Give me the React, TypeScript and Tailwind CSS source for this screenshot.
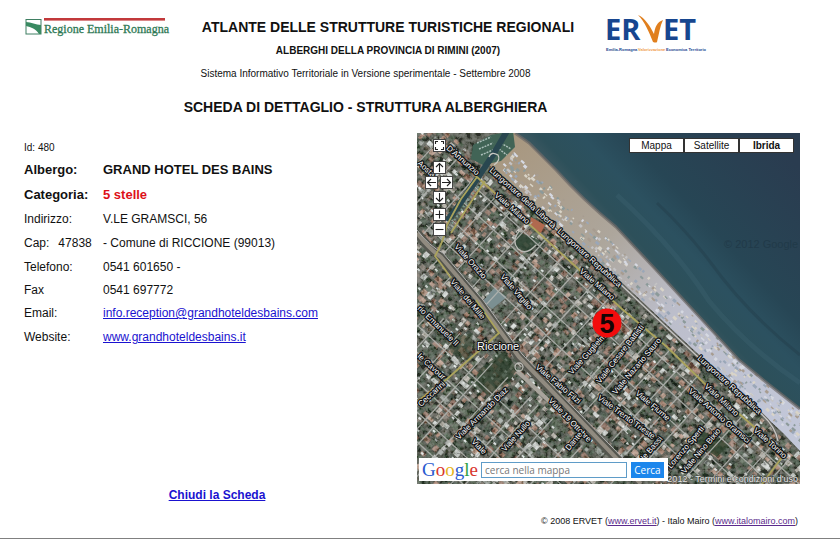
import React from "react";

const LINK = "text-[#1a12d0] underline";
const VISITED = "text-[#5b2a8c] underline";

function RegioneLogo() {
  return (
    <svg className="block h-[22px] w-[152px]" viewBox="0 0 152 22" role="img" aria-label="Regione Emilia-Romagna">
      <rect x="2" y="2.5" width="15" height="14.5" fill="#fff" stroke="#3f7f62" strokeWidth="1" />
      <path d="M2 5 C7 5 12 8 17 8 V17 H15 C12 12 7 10 2 9 Z" fill="#3a8a62" />
      <rect x="20" y="1" width="121" height="2.6" fill="#c2393b" />
      <text x="20" y="16" fontSize="12" fontWeight="400" fill="#2f7a56" stroke="#2f7a56" strokeWidth="0.3" fontFamily="'Liberation Serif', serif">
        Regione Emilia-Romagna
      </text>
    </svg>
  );
}

function ErvetLogo() {
  return (
    <svg className="block h-[52px] w-[110px]" viewBox="0 -8 110 52" role="img" aria-label="ERVET">
      <g fontFamily="'Open Sans', sans-serif" fontWeight="700" fontSize="29" fill="#17468f">
        <text x="0" y="26">ER</text>
        <text x="58" y="26">ET</text>
      </g>
      <path d="M33 1 C40 4 45 12 49 20 C50 13 52 8 58 6 C55 12 54 20 52 28 Q51 29 48 28 C44 18 40 8 33 1 Z" fill="#e07f1e" />
      <g fontFamily="'Liberation Sans', sans-serif" fontWeight="700" fontSize="4" fill="#17468f">
        <text x="1" y="37">Emilia-Romagna</text>
        <text x="33" y="37" fill="#f09a44">Valorizzazione</text>
        <text x="61" y="37">Economica Territorio</text>
      </g>
    </svg>
  );
}

function makeRandom(seed: number) {
  let s = seed;
  return () => {
    s = (s * 1664525 + 1013904223) % 4294967296;
    return s / 4294967296;
  };
}

type Block = { x: number; y: number; w: number; h: number; fill: string };

const ROOFS = ["#8f6c5d", "#b08b79", "#6c6157", "#b9b3ab", "#7d5647", "#8e9590", "#ced2d0", "#55544c", "#9c705c"];
const TREES = ["#2a3c2c", "#364a36", "#1f2d24", "#42523f", "#2d3f2f"];

function makeBlocks(): Block[] {
  const rnd = makeRandom(47838);
  const out: Block[] = [];
  for (let u = -90; u < 450; u += 6) {
    for (let v = 3; v < 300; v += 6) {
      const roof = rnd() < 0.54;
      const list = roof ? ROOFS : TREES;
      const fill = list[Math.floor(rnd() * list.length)];
      out.push({ x: u + rnd() * 3, y: v + rnd() * 3, w: 3 + rnd() * 4, h: 3 + rnd() * 3, fill });
      if (rnd() < 0.14) out.push({ x: u + rnd() * 4, y: v + rnd() * 4, w: 3, h: 2, fill: "#dfe6e6" });
    }
  }
  return out;
}

const BLOCKS = makeBlocks();

function makeCabins(): Block[] {
  const rnd = makeRandom(99013);
  const out: Block[] = [];
  const tones = ["#c4c3c4", "#8c9a9a", "#d6d9e2", "#a79c90", "#9aa7b8", "#d9d4c8"];
  for (let i = 0; i < 480; i++) {
    const u = 5 + rnd() * 430;
    out.push({ x: u, y: -4 - rnd() * 22, w: 1.5 + rnd() * 3, h: 1 + rnd() * 2, fill: tones[Math.floor(rnd() * 6)] });
  }
  return out;
}

const CABINS = makeCabins();
const CROSS_ROADS = [-58, -32, -6, 22, 43, 66, 88, 112, 132, 153, 174, 194, 214, 233, 254, 273, 292, 312, 331, 352, 372, 394, 416];
const LONG_ROADS = [27, 46, 67, 88, 168, 188, 210, 232, 254];

const LABELS: [number, number, number, string][] = [
  [29, 16, 41, "D'Annunzio"],
  [0, 31, 42, "Aosta"],
  [72, 38, 42, "Lungomare della Libertà"],
  [140, 99, 42, "Lungomare Repubblica"],
  [77, 63, 41, "Viale Milano"],
  [162, 139, 41, "Viale Milano"],
  [37, 114, 48, "Viale Orazio"],
  [83, 144, 49, "Viale Virgilio"],
  [33, 149, 50, "Viale dei Mille"],
  [0, 176, 44, "rio Emanuele II"],
  [0, 224, 42, "le Cavour"],
  [4, 274, -42, "Ceccarini"],
  [42, 307, -45, "Viale Armando Diaz"],
  [88, 319, -48, "Viale Nullo"],
  [118, 235, 40, "Viale Fabio Filzi"],
  [131, 268, 46, "Viale 19 Ottobre"],
  [155, 242, -48, "Viale Guglielmo"],
  [183, 251, -52, "Viale Cesare Battisti"],
  [199, 262, -50, "Viale Nazario Sauro"],
  [218, 261, 40, "Viale Fiume"],
  [180, 266, 36, "Viale Trento Trieste"],
  [280, 226, 42, "Lungomare Repubblica"],
  [287, 254, 43, "Viale Milano"],
  [271, 259, 41, "Viale Antonio Gramsci"],
  [336, 298, 42, "Viale Torino"],
  [220, 336, -49, "Viale Bassi"],
  [254, 336, -50, "Lorenzo Sperti"],
  [268, 341, -50, "Viale Nino Bixio"],
  [54, 309, 46, "Viale"],
  [152, 318, -50, "Dante"],
];

function MapPicture() {
  return (
    <svg className="block h-full w-full" viewBox="0 0 383 351" preserveAspectRatio="xMinYMin slice" aria-hidden="true">
      <defs>
        <linearGradient id="sea" gradientUnits="userSpaceOnUse" x1="210" y1="130" x2="350" y2="0">
          <stop offset="0" stopColor="#445c64" />
          <stop offset="0.12" stopColor="#2d505a" />
          <stop offset="0.28" stopColor="#2c5160" />
          <stop offset="0.45" stopColor="#274655" />
          <stop offset="1" stopColor="#2a3c50" />
        </linearGradient>
        <linearGradient id="sand" gradientUnits="userSpaceOnUse" x1="90" y1="10" x2="370" y2="290">
          <stop offset="0" stopColor="#a8977f" />
          <stop offset="0.35" stopColor="#ada69c" />
          <stop offset="0.6" stopColor="#bcbecb" />
          <stop offset="1" stopColor="#c2c7d8" />
        </linearGradient>
        <filter id="grain" x="0" y="0" width="100%" height="100%">
          <feTurbulence type="fractalNoise" baseFrequency="0.22" numOctaves="3" seed="5" />
          <feColorMatrix values="2.4 0 0 0 -0.8  2.4 0 0 0 -0.78  2.4 0 0 0 -0.82  0 0 0 0 0.3" />
        </filter>
        <clipPath id="land">
          <path d="M0 0 H88 L72 32 L140 95 L200 145 L280 220 L366 300 L383 318 V351 H0 Z" />
        </clipPath>
      </defs>

      <rect width="383" height="351" fill="#3e4239" />
      <g clipPath="url(#land)">
        <g transform="translate(76 34) rotate(42.5)">
          {BLOCKS.map((b, i) => (
            <rect key={i} x={b.x} y={b.y} width={b.w} height={b.h} fill={b.fill} />
          ))}
        </g>
        <rect width="383" height="351" filter="url(#grain)" />
        <path d="M64 235 L88 218 L100 236 L92 250 L70 262 L58 250 Z" fill="#2a3d29" opacity="0.65" />
        <path d="M30 205 L56 200 L52 228 L34 220 Z" fill="#35452f" opacity="0.5" />
        <path d="M100 98 L124 108 L112 121 L98 114 Z" fill="#2f4535" opacity="0.85" />
        <path d="M282 296 L312 312 L300 324 L280 310 Z" fill="#2f432e" opacity="0.8" />
        <path d="M77 155 L90 164 L75 176 L66 168 Z" fill="#7b8f92" />
        <path d="M114 84 L128 92 L124 100 L112 92 Z" fill="#b0694f" />
        <g transform="translate(76 34) rotate(42.5)" stroke="#b4b6b2" strokeWidth="1.3" opacity="0.85">
          {CROSS_ROADS.map((u, i) => (
            <path key={u} d={i % 3 === 1 ? `M${u} 14 V122 M${u + 9} 145 V300` : `M${u} 14 V122 M${u} 145 V300`} />
          ))}
          {LONG_ROADS.map((v) => (
            <path key={v} d={`M${v < 100 ? -10 : -80} ${v} H450`} />
          ))}
        </g>
        <path d="M0 100 Q12 116 24 124 L62 169 L102 224 L156 280 L224 351" fill="none" stroke="#55564f" strokeWidth="9" />
        <path d="M0 100 Q12 116 24 124 L62 169 L102 224 L156 280 L224 351" fill="none" stroke="#918b80" strokeWidth="4" />
        <path d="M0 97 Q12 113 26 120 L66 167 L105 221 L159 277 L228 348" fill="none" stroke="#b3b3b3" strokeWidth="1" />
        <path d="M100 238 L132 268 L152 290" fill="none" stroke="#a8a49c" strokeWidth="4" />
        <path d="M105 95 q-12 12 -4 21 q8 7 18 -4" fill="none" stroke="#b8b9b4" strokeWidth="1.4" />
      </g>

      <path d="M88 0 L72 32 L140 95 L200 145 L280 220 L366 300 L383 318 V270 L322 227 L276 177 L199 94 L132 30 L102 0 Z" fill="url(#sand)" />
      <g transform="translate(76 34) rotate(42.5)">
        {CABINS.map((b, i) => (
          <rect key={i} x={b.x} y={b.y} width={b.w} height={b.h} fill={b.fill} />
        ))}
      </g>
      <path d="M98 0 H383 V276 L350 250 L322 227 L276 177 L240 138 L199 94 Q165 66 140 38 L112 10 Z" fill="url(#sea)" />
      <path d="M98 0 L112 10 L140 38 Q165 66 199 94 L240 138 L276 177 L322 227 L350 250 L383 276" fill="none" stroke="#6e6a68" strokeWidth="3" opacity="0.7" />
      <path d="M240 70 Q270 98 294 130 Q330 180 383 222" fill="none" stroke="#223c49" strokeWidth="3" opacity="0.4" />
      <path d="M200 62 Q258 115 292 168 Q330 214 383 250" fill="none" stroke="#4a7482" strokeWidth="5" opacity="0.2" />

      <path d="M56 12 L74 2 L96 -2 L98 14 L84 28 L66 32 L54 26 Z" fill="#416456" />
      <path d="M60 10 l14 -6 M62 16 l14 -6 M64 22 l12 -5 M84 10 l10 6 M82 16 l8 6" stroke="#aabdb8" strokeWidth="1.5" strokeDasharray="2 1" />
      <path d="M90 -2 L76 22 L60 46 L42 72 L30 88" fill="none" stroke="#294750" strokeWidth="6" />
      <path d="M64 50 L52 66 L34 92" fill="none" stroke="#7d9a90" strokeWidth="2" strokeDasharray="2 2" />
      <path d="M72 24 q2 -6 9 -2 q3 5 -4 10" fill="none" stroke="#c9c9c2" strokeWidth="1.3" />

      <g fill="none" stroke="#aaa35c" strokeWidth="1.8">
        <path d="M30 14 L60 44 L124 102 L168 142 L205 176 L250 214 L287 250 L344 300 L366 323" />
        <path d="M60 44 L44 66 L30 92 Q26 110 18 123 Q25 132 34 145" />
        <path d="M68 48 L52 72 L34 100" />
        <path d="M59 167 L82 200 L30 246 L-2 270" />
        <path d="M366 323 L345 351" />
      </g>
      <path d="M74 34 L140 97 L200 148 L280 223 L342 279 Q358 292 361 308" fill="none" stroke="#6b6a65" strokeWidth="3" />
      <path d="M74 34 L140 97 L200 148 L280 223 L342 279 Q358 292 361 308" fill="none" stroke="#c8c8c5" strokeWidth="1.2" />
      <circle cx="102" cy="234" r="4" fill="none" stroke="#bdbdb8" strokeWidth="1.3" />

      <g fontFamily="'Liberation Sans', sans-serif" fontSize="8" fill="#ffffff" stroke="#101214" strokeWidth="2.6" paintOrder="stroke" strokeLinejoin="round">
        {LABELS.map(([x, y, a, t]) => (
          <text key={`${x}-${y}`} transform={`translate(${x} ${y}) rotate(${a})`}>
            {t}
          </text>
        ))}
        <text x="60" y="217" fontSize="11" strokeWidth="2">Riccione</text>
        <text x="381" y="349" textAnchor="end" fontSize="9" strokeWidth="1" stroke="#4b4e49" fill="#e6e6e6">
          ©2012 - Termini e condizioni d'uso
        </text>
      </g>
      <text x="307" y="115" fontFamily="'Liberation Sans', sans-serif" fontSize="11" fill="#213a49">© 2012 Google</text>

      <circle cx="190" cy="190" r="14.5" fill="#f20d0d" />
      <text x="190" y="200" textAnchor="middle" fontFamily="'Liberation Sans', sans-serif" fontWeight="700" fontSize="27" fill="#140505">
        5
      </text>
    </svg>
  );
}

function ControlButton({ label, path, className }: { label: string; path: string; className: string }) {
  return (
    <button type="button" aria-label={label} className={`${className} size-[13px] border border-[#444] bg-white`}>
      <svg className="block size-[11px]" viewBox="0 0 11 11" fill="none" stroke="#222" strokeWidth="1.1" aria-hidden="true">
        <path d={path} />
      </svg>
    </button>
  );
}

function MapControls() {
  return (
    <div className="absolute left-[8px] top-[6px] flex w-[28px] flex-col items-center">
      <ControlButton className="mb-[9px]" label="Schermo intero" path="M1.5 4 V1.5 H4 M7 1.5 H9.5 V4 M9.5 7 V9.5 H7 M4 9.5 H1.5 V7" />
      <ControlButton className="mb-[2px]" label="Su" path="M5.5 10 V1.5 M2 5 L5.5 1.5 L9 5" />
      <div className="mb-[2px] flex w-full justify-between">
        <ControlButton className="" label="Sinistra" path="M10 5.5 H1.5 M5 2 L1.5 5.5 L5 9" />
        <ControlButton className="" label="Destra" path="M1 5.5 H9.5 M6 2 L9.5 5.5 L6 9" />
      </div>
      <ControlButton className="mb-[4px]" label="Giù" path="M5.5 1 V9.5 M2 6 L5.5 9.5 L9 6" />
      <ControlButton className="mb-[2px]" label="Aumenta zoom" path="M1.5 5.5 H9.5 M5.5 1.5 V9.5" />
      <ControlButton className="" label="Riduci zoom" path="M1.5 5.5 H9.5" />
    </div>
  );
}

function MapPanel() {
  return (
    <section aria-label="Mappa" className="relative h-[351px] overflow-hidden">
      <MapPicture />
      <MapControls />
      <div className="absolute right-[6px] top-[5px] grid w-[165px] grid-cols-3 text-[10px] leading-[13px]">
        <button type="button" className="border border-[#333] bg-white">Mappa</button>
        <button type="button" className="border border-[#333] bg-white">Satellite</button>
        <button type="button" className="border border-[#333] bg-white font-bold">Ibrida</button>
      </div>
      <form
        onSubmit={(e) => e.preventDefault()}
        className="absolute bottom-[3px] left-[2px] flex h-[23px] w-[249px] items-center gap-[4px] bg-white pl-[3px] pr-[4px]"
      >
        <span aria-label="Google" className="w-[55px] font-['Liberation_Serif',serif] text-[19px] leading-[22px]">
          <span className="text-[#2a5bd0]">G</span>
          <span className="text-[#d8362e]">o</span>
          <span className="text-[#e6b41c]">o</span>
          <span className="text-[#2a5bd0]">g</span>
          <span className="text-[#2f9e45]">l</span>
          <span className="text-[#d8362e]">e</span>
        </span>
        <input
          type="text"
          aria-label="cerca nella mappa"
          placeholder="cerca nella mappa"
          className="h-[16px] min-w-0 flex-1 border border-[#5f9cc8] bg-white px-[3px] font-['Open_Sans',sans-serif] text-[10px] placeholder:text-[#777]"
        />
        <button type="submit" className="h-[16px] w-[33px] bg-[#1c86ec] font-['Open_Sans',sans-serif] text-[10px] leading-[16px] text-white">
          Cerca
        </button>
      </form>
    </section>
  );
}

function Row({ label, className, children }: { label: React.ReactNode; className: string; children: React.ReactNode }) {
  return (
    <div className={`flex items-center ${className}`}>
      <dt className="w-[79px] shrink-0">{label}</dt>
      <dd>{children}</dd>
    </div>
  );
}

export default function App() {
  return (
    <div className="border-b border-[#808080] bg-white pb-[10px] font-['Liberation_Sans',Arial,sans-serif] text-[11px] text-[#111]">
      <header>
        <div className="flex h-[66px] items-start pl-6">
          <div className="w-[160px] shrink-0 pt-[17px]">
            <RegioneLogo />
          </div>
          <div className="w-[408px] shrink-0 pt-[18px] text-center">
            <h1 className="text-[14px] font-bold leading-[18px]">ATLANTE DELLE STRUTTURE TURISTICHE REGIONALI</h1>
            <h2 className="pt-[7px] text-[10px] font-bold leading-[16px]">ALBERGHI DELLA PROVINCIA DI RIMINI (2007)</h2>
          </div>
          <div className="pl-[13px] pt-[6px]">
            <ErvetLogo />
          </div>
        </div>
        <div className="ml-6 max-w-[683px] text-center">
          <p className="text-[10px] leading-[16px]">Sistema Informativo Territoriale in Versione sperimentale - Settembre 2008</p>
          <h2 className="pt-[16px] text-[14px] font-bold leading-[18px]">SCHEDA DI DETTAGLIO - STRUTTURA ALBERGHIERA</h2>
        </div>
      </header>

      <main className="flex pl-6 pr-10 pt-[17px]">
        <div className="flex w-[393px] shrink-0 flex-col">
          <p className="pt-[7px] text-[10px] leading-[15px]">Id: 480</p>
          <dl className="pt-[3px] text-[12px] leading-[16px]">
            <Row className="h-[24px] text-[13px] font-bold" label="Albergo:">GRAND HOTEL DES BAINS</Row>
            <Row className="h-[25px] text-[13px] font-bold" label="Categoria:">
              <span className="text-[#dd1018]">5 stelle</span>
            </Row>
            <Row className="h-[24px]" label="Indirizzo:">V.LE GRAMSCI, 56</Row>
            <Row className="h-[24px]" label={<span className="flex gap-[9px]"><span>Cap:</span><span>47838</span></span>}>
              - Comune di RICCIONE (99013)
            </Row>
            <Row className="h-[23px]" label="Telefono:">0541 601650 -</Row>
            <Row className="h-[23px]" label="Fax">0541 697772</Row>
            <Row className="h-[24px]" label="Email:">
              <a className={LINK} href="mailto:info.reception@grandhoteldesbains.com">info.reception@grandhoteldesbains.com</a>
            </Row>
            <Row className="h-[24px]" label="Website:">
              <a className={LINK} href="#sito">www.grandhoteldesbains.it</a>
            </Row>
          </dl>
        </div>
        <div className="min-w-0 flex-1">
          <MapPanel />
        </div>
      </main>

      <div className="ml-6 w-[386px] pt-[3px] text-center text-[12px] font-bold leading-[16px]">
        <a className={LINK} href="#chiudi">Chiudi la Scheda</a>
      </div>
      <footer className="pr-[42px] pt-[11px] text-right text-[9px] leading-[14px]">
        © 2008 ERVET (<a className={VISITED} href="#ervet">www.ervet.it</a>) - Italo Mairo (
        <a className={VISITED} href="#italomairo">www.italomairo.com</a>)
      </footer>
    </div>
  );
}
